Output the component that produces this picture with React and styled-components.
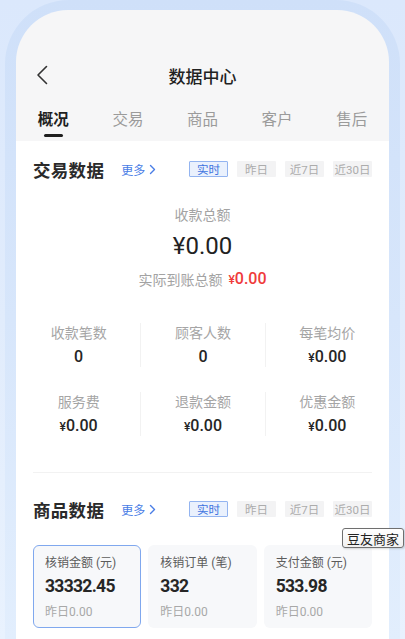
import React from "react";
import styled, { createGlobalStyle } from "styled-components";

const Global = createGlobalStyle`
  html, body { margin: 0; padding: 0; }
  body {
    font-family: Roboto, "Noto Sans CJK SC", sans-serif;
    background: #e4eefd;
  }
`;

const Page = styled.div`
  position: relative;
  height: 639px;
  overflow: hidden;
  padding: 0 5px;
  box-sizing: border-box;
  background: linear-gradient(180deg, #dbe8fc 0%, #e1ecfc 50%, #e9f2fe 100%);
`;

const Bezel = styled.div`
  height: 100%;
  box-sizing: border-box;
  padding: 10px 11px 0;
  border-radius: 64px 64px 0 0;
  background: linear-gradient(180deg, #cfe0f9 0%, #d7e6fb 50%, #e2eefd 100%);
`;

const Screen = styled.div`
  height: 100%;
  display: flex;
  flex-direction: column;
  border-radius: 52px 52px 0 0;
  background: #f6f6f7;
  overflow: hidden;
  font-family: Roboto, "Noto Sans CJK SC", sans-serif;
`;

const NavBar = styled.div`
  margin-top: 43px;
  height: 44px;
  display: grid;
  grid-template-columns: 60px 1fr 60px;
  align-items: center;
`;

const BackButton = styled.div`
  margin-left: 20px;
  display: flex;
  align-items: center;
`;

const Title = styled.div`
  text-align: center;
  font-size: 17px;
  font-weight: 500;
  color: #222;
`;

const Tabs = styled.div`
  margin-top: 12px;
  display: grid;
  grid-template-columns: repeat(5, 1fr);
  padding-bottom: 4px;
`;

const Tab = styled.div`
  display: flex;
  flex-direction: column;
  align-items: center;
  font-size: 15.5px;
  line-height: 22px;
  color: ${(p) => (p.$active ? "#1f1f1f" : "#9b9b9b")};
  font-weight: ${(p) => (p.$active ? 700 : 400)};
`;

const Indicator = styled.span`
  margin-top: 3px;
  width: 19px;
  height: 3px;
  border-radius: 2px;
  background: ${(p) => (p.$show ? "#1f1f1f" : "transparent")};
`;

const Card = styled.div`
  flex: 1;
  background: #fff;
  padding: 10px 17px 0;
`;

const SectionHeader = styled.div`
  display: flex;
  align-items: center;
  height: 36px;
  margin-top: ${(p) => p.$mt || 0}px;
`;

const SectionTitle = styled.div`
  font-size: 17.5px;
  font-weight: 700;
  color: #2a2a2a;
  letter-spacing: 0.3px;
`;

const More = styled.div`
  margin-left: 17px;
  display: flex;
  align-items: center;
  gap: 4px;
  font-size: 12px;
  color: #4a7de6;
`;

const Pills = styled.div`
  margin-left: auto;
  display: flex;
  gap: 9px;
`;

const Pill = styled.div`
  width: 39px;
  height: 16px;
  box-sizing: border-box;
  display: flex;
  align-items: center;
  justify-content: center;
  font-size: 11.5px;
  border-radius: 1px;
  border: 1px solid ${(p) => (p.$active ? "#93b4f0" : "transparent")};
  background: ${(p) => (p.$active ? "#eaf1fd" : "#f3f3f4")};
  color: ${(p) => (p.$active ? "#3e74e0" : "#acacac")};
`;

const Total = styled.div`
  margin-top: 18px;
  display: flex;
  flex-direction: column;
  align-items: center;
`;

const TotalLabel = styled.div`
  font-size: 14px;
  line-height: 20px;
  color: #a3a3a3;
`;

const TotalAmount = styled.div`
  margin-top: 6px;
  font-size: 24px;
  line-height: 30px;
  color: #222;
`;

const Actual = styled.div`
  margin-top: 8px;
  display: flex;
  align-items: center;
  gap: 6px;
  line-height: 20px;
`;

const ActualValue = styled.span`
  font-size: 16px;
  font-weight: 500;
  color: #ef3b3b;
`;

const Yen = styled.span`
  font-size: 0.75em;
`;

const StatGrid = styled.div`
  margin: 33px -17px 0;
  display: grid;
  grid-template-columns: repeat(3, 1fr);
  row-gap: 25px;
`;

const Stat = styled.div`
  display: flex;
  flex-direction: column;
  align-items: center;
  height: 44px;
  border-left: 1px solid ${(p) => (p.$divider ? "#f2f2f2" : "transparent")};
`;

const StatLabel = styled.div`
  font-size: 14px;
  line-height: 20px;
  color: #a5a5a5;
`;

const StatValue = styled.div`
  margin-top: 3px;
  font-size: 16px;
  line-height: 21px;
  font-weight: 500;
  color: #262626;
`;

const Divider = styled.div`
  margin-top: 36px;
  height: 1px;
  background: #f2f2f2;
`;

const GoodsGrid = styled.div`
  margin-top: 18px;
  display: grid;
  grid-template-columns: repeat(3, 1fr);
  gap: 7px;
`;

const GoodsCard = styled.div`
  height: 83px;
  box-sizing: border-box;
  padding: 8px 11px 0;
  border-radius: 6px;
  background: #f7f8fa;
  border: 1.5px solid ${(p) => (p.$active ? "#80a8ee" : "transparent")};
`;

const GoodsLabel = styled.div`
  font-size: 12px;
  line-height: 18px;
  color: #5c5c5c;
`;

const GoodsValue = styled.div`
  margin-top: 2px;
  font-size: 17.5px;
  line-height: 24px;
  font-weight: 700;
  letter-spacing: -0.7px;
  color: #262626;
`;

const GoodsSub = styled.div`
  margin-top: 5px;
  font-size: 12px;
  line-height: 18px;
  color: #a8a8a8;
`;

const Tooltip = styled.div`
  position: absolute;
  left: 342px;
  top: 528px;
  padding: 0 4px;
  height: 20px;
  box-sizing: border-box;
  display: flex;
  align-items: center;
  border: 1px solid #6f6f6f;
  border-radius: 3px;
  background: linear-gradient(180deg, #ffffff, #f1f1f1);
  font-family: "Noto Sans CJK SC", sans-serif;
  font-size: 13px;
  color: #222;
  box-shadow: 1px 1px 2px rgba(0, 0, 0, 0.15);
`;

const BackIcon = () => (
  <svg width="12" height="20" viewBox="0 0 12 20">
    <path d="M10.5 1.5 L2 10 L10.5 18.5" fill="none" stroke="#333" strokeWidth="1.6" strokeLinecap="round" strokeLinejoin="round" />
  </svg>
);

const MoreArrow = () => (
  <svg width="7" height="11" viewBox="0 0 7 11">
    <path d="M1.5 1.5 L5.5 5.5 L1.5 9.5" fill="none" stroke="#4a7de6" strokeWidth="1.4" strokeLinecap="round" strokeLinejoin="round" />
  </svg>
);

const tabs = ["概况", "交易", "商品", "客户", "售后"];
const ranges = ["实时", "昨日", "近7日", "近30日"];
const stats = [
  { label: "收款笔数", value: "0" },
  { label: "顾客人数", value: "0" },
  { label: "每笔均价", value: "0.00", yen: true },
  { label: "服务费", value: "0.00", yen: true },
  { label: "退款金额", value: "0.00", yen: true },
  { label: "优惠金额", value: "0.00", yen: true },
];
const goods = [
  { label: "核销金额 (元)", value: "33332.45", active: true },
  { label: "核销订单 (笔)", value: "332" },
  { label: "支付金额 (元)", value: "533.98" },
];

const Header = ({ title, mt }) => (
  <SectionHeader $mt={mt}>
    <SectionTitle>{title}</SectionTitle>
    <More>
      更多
      <MoreArrow />
    </More>
    <Pills>
      {ranges.map((r, i) => (
        <Pill key={r} $active={i === 0}>
          {r}
        </Pill>
      ))}
    </Pills>
  </SectionHeader>
);

export default function App() {
  return (
    <>
      <Global />
      <Page>
        <Bezel>
          <Screen>
            <NavBar>
              <BackButton>
                <BackIcon />
              </BackButton>
              <Title>数据中心</Title>
              <span />
            </NavBar>
            <Tabs>
              {tabs.map((t, i) => (
                <Tab key={t} $active={i === 0}>
                  {t}
                  <Indicator $show={i === 0} />
                </Tab>
              ))}
            </Tabs>
            <Card>
              <Header title="交易数据" />
              <Total>
                <TotalLabel>收款总额</TotalLabel>
                <TotalAmount>¥0.00</TotalAmount>
                <Actual>
                  <TotalLabel>实际到账总额</TotalLabel>
                  <ActualValue>
                    <Yen>¥</Yen>0.00
                  </ActualValue>
                </Actual>
              </Total>
              <StatGrid>
                {stats.map((s, i) => (
                  <Stat key={s.label} $divider={i % 3 !== 0}>
                    <StatLabel>{s.label}</StatLabel>
                    <StatValue>
                      {s.yen && <Yen>¥</Yen>}
                      {s.value}
                    </StatValue>
                  </Stat>
                ))}
              </StatGrid>
              <Divider />
              <Header title="商品数据" mt={18} />
              <GoodsGrid>
                {goods.map((g) => (
                  <GoodsCard key={g.label} $active={g.active}>
                    <GoodsLabel>{g.label}</GoodsLabel>
                    <GoodsValue>{g.value}</GoodsValue>
                    <GoodsSub>昨日0.00</GoodsSub>
                  </GoodsCard>
                ))}
              </GoodsGrid>
            </Card>
          </Screen>
        </Bezel>
        <Tooltip>豆友商家</Tooltip>
      </Page>
    </>
  );
}
